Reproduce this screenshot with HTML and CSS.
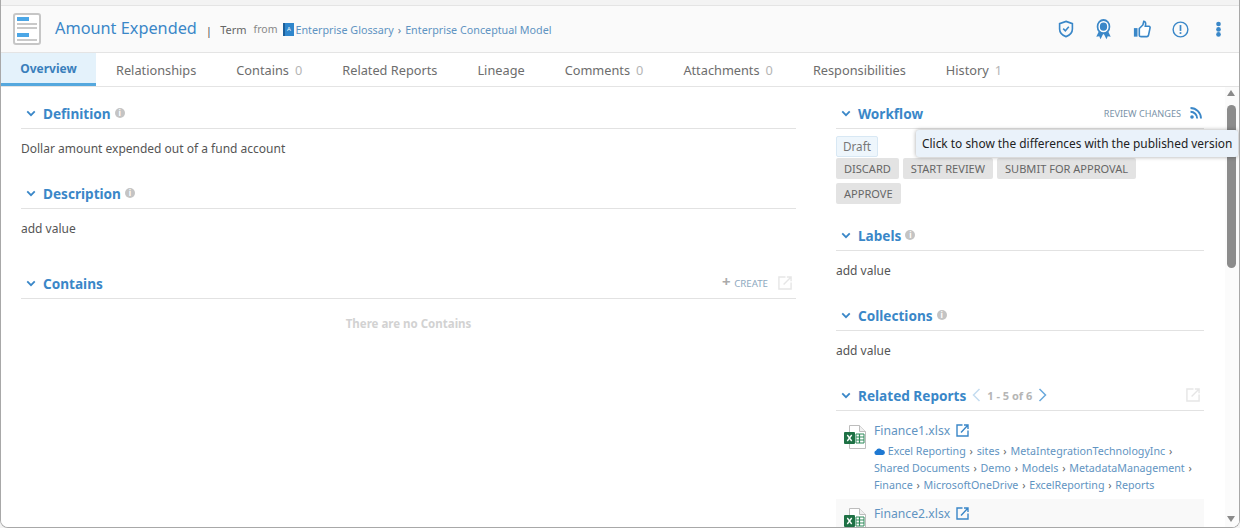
FILE: index.html
```html
<!DOCTYPE html>
<html lang="en">
<head>
<meta charset="utf-8">
<title>Amount Expended</title>
<link rel="stylesheet" href="styles.css">
</head>
<body>
<div class="app">
  <header class="head">
    <svg class="term-icon" width="28" height="32" viewBox="0 0 28 32">
      <rect x="1" y="1" width="26" height="30" rx="2" fill="#fff" stroke="#c6c6c6" stroke-width="2"/>
      <rect x="4" y="4" width="12" height="4" fill="#4ba6e6"/>
      <rect x="4" y="10" width="20" height="2" fill="#c9c9c9"/>
      <rect x="4" y="14" width="20" height="2" fill="#c9c9c9"/>
      <rect x="4" y="20" width="12" height="4" fill="#4ba6e6"/>
      <rect x="4" y="26" width="20" height="2" fill="#c9c9c9"/>
    </svg>
    <h1 class="title">Amount Expended</h1>
    <span class="sep">|</span>
    <span class="kind">Term</span>
    <span class="from">from</span>
    <span class="glossary-icon">A</span>
    <a class="crumb">Enterprise Glossary</a>
    <span class="crumb-sep">›</span>
    <a class="crumb">Enterprise Conceptual Model</a>
    <div class="actions">
      <svg width="16" height="18" viewBox="0 0 20 20" preserveAspectRatio="none" fill="none" stroke="#3a87c8" stroke-width="2"><path d="M10 1.500 18 4v6c0 4.500-3.500 7-8 8.500C5.500 17 2 14.500 2 10V4z"/><path d="M6.500 9.500 9.200 12l4.300-4.500"/></svg>
      <svg width="17" height="21" viewBox="0 0 20 22" preserveAspectRatio="none"><path d="M5 12 1.500 18.500l3.500-.3 1.500 3L10 15l3.500 6.200 1.500-3 3.500.3L15 12z" fill="#3a87c8"/><circle cx="10" cy="8" r="7" fill="#fff" stroke="#3a87c8" stroke-width="2"/><circle cx="10" cy="8" r="4.300" fill="#3a87c8"/></svg>
      <svg width="18" height="18" viewBox="0 0 20 20"><rect x="1" y="9" width="4" height="9.500" fill="#3a87c8"/><path d="M7 9.500 11 5.500 12 1.500c2 0 2.500 2 1.700 5.500h4c1 0 1.500 1 1.200 2l-1.700 8c-.2.800-.8 1.500-1.700 1.500H9c-1 0-2-.5-2-1.500z" fill="#fff" stroke="#3a87c8" stroke-width="1.800"/></svg>
      <svg width="17" height="17" viewBox="0 0 18 18"><circle cx="9" cy="9" r="7.800" fill="none" stroke="#3a87c8" stroke-width="1.500"/><rect x="8.100" y="4.300" width="1.800" height="6.200" fill="#3a87c8"/><rect x="8.100" y="11.800" width="1.800" height="1.900" fill="#3a87c8"/></svg>
      <svg class="dots" width="5" height="18" viewBox="0 0 6 18"><circle cx="3" cy="3" r="2.800" fill="#3a87c8"/><circle cx="3" cy="9.500" r="2.800" fill="#3a87c8"/><circle cx="3" cy="15.500" r="2.800" fill="#3a87c8"/></svg>
    </div>
  </header>
  <nav class="tabs">
    <a class="tab active">Overview</a>
    <a class="tab">Relationships</a>
    <a class="tab">Contains <i>0</i></a>
    <a class="tab">Related Reports</a>
    <a class="tab">Lineage</a>
    <a class="tab">Comments <i>0</i></a>
    <a class="tab">Attachments <i>0</i></a>
    <a class="tab">Responsibilities</a>
    <a class="tab">History <i>1</i></a>
  </nav>
  <div class="body">
    <main class="left">
      <section class="sec">
        <div class="sec-head"><svg class="chev" width="10" height="7" viewBox="0 0 12 8"><path d="M1.500 1.500 6 6l4.500-4.500" fill="none" stroke="#3a87c8" stroke-width="2.200"/></svg><h2>Definition</h2><span class="info">i</span></div>
        <p class="val">Dollar amount expended out of a fund account</p>
      </section>
      <section class="sec">
        <div class="sec-head"><svg class="chev" width="10" height="7" viewBox="0 0 12 8"><path d="M1.500 1.500 6 6l4.500-4.500" fill="none" stroke="#3a87c8" stroke-width="2.200"/></svg><h2>Description</h2><span class="info">i</span></div>
        <p class="val">add value</p>
      </section>
      <section class="sec contains">
        <div class="sec-head"><svg class="chev" width="10" height="7" viewBox="0 0 12 8"><path d="M1.500 1.500 6 6l4.500-4.500" fill="none" stroke="#3a87c8" stroke-width="2.200"/></svg><h2>Contains</h2>
          <span class="create"><b>+</b> CREATE</span>
          <svg class="ext faint" width="14" height="14" viewBox="0 0 15 15" fill="none" stroke="#e6e6e6" stroke-width="1.500"><path d="M8 1H1v13h13V7"/><path d="M6 9 14 1M9.500 1H14v4.500"/></svg>
        </div>
        <p class="empty">There are no Contains</p>
      </section>
    </main>
    <aside class="right">
      <section class="sec workflow">
        <div class="sec-head"><svg class="chev" width="10" height="7" viewBox="0 0 12 8"><path d="M1.500 1.500 6 6l4.500-4.500" fill="none" stroke="#3a87c8" stroke-width="2.200"/></svg><h2>Workflow</h2>
          <span class="review">REVIEW CHANGES</span>
          <svg class="rss" width="12" height="12" viewBox="0 0 12 12"><circle cx="2" cy="10" r="1.800" fill="#3a87c8"/><path d="M.5 4.800a6.700 6.700 0 0 1 6.700 6.700M.5 1a10.500 10.500 0 0 1 10.500 10.500" fill="none" stroke="#3a87c8" stroke-width="1.900"/></svg>
        </div>
        <div class="wf">
          <span class="draft">Draft</span>
          <div class="btns"><span class="btn">DISCARD</span><span class="btn">START REVIEW</span><span class="btn">SUBMIT FOR APPROVAL</span><span class="btn">APPROVE</span></div>
        </div>
      </section>
      <section class="sec">
        <div class="sec-head"><svg class="chev" width="10" height="7" viewBox="0 0 12 8"><path d="M1.500 1.500 6 6l4.500-4.500" fill="none" stroke="#3a87c8" stroke-width="2.200"/></svg><h2>Labels</h2><span class="info">i</span></div>
        <p class="val">add value</p>
      </section>
      <section class="sec">
        <div class="sec-head"><svg class="chev" width="10" height="7" viewBox="0 0 12 8"><path d="M1.500 1.500 6 6l4.500-4.500" fill="none" stroke="#3a87c8" stroke-width="2.200"/></svg><h2>Collections</h2><span class="info">i</span></div>
        <p class="val">add value</p>
      </section>
      <section class="sec">
        <div class="sec-head"><svg class="chev" width="10" height="7" viewBox="0 0 12 8"><path d="M1.500 1.500 6 6l4.500-4.500" fill="none" stroke="#3a87c8" stroke-width="2.200"/></svg><h2>Related Reports</h2>
          <svg class="pg" width="9" height="14" viewBox="0 0 9 14"><path d="M7.500 1 1.500 7l6 6" fill="none" stroke="#c4dcf0" stroke-width="1.500"/></svg>
          <span class="pages">1 - 5 of 6</span>
          <svg class="pg" width="9" height="14" viewBox="0 0 9 14"><path d="M1.500 1l6 6-6 6" fill="none" stroke="#6aa9dc" stroke-width="1.500"/></svg>
          <svg class="ext faint" width="14" height="14" viewBox="0 0 15 15" fill="none" stroke="#e6e6e6" stroke-width="1.500"><path d="M8 1H1v13h13V7"/><path d="M6 9 14 1M9.500 1H14v4.500"/></svg>
        </div>
        <div class="report">
          <svg class="xls" width="22" height="24" viewBox="0 0 22 24"><path d="M5.500.500h10l6 6v17h-16z" fill="#fff" stroke="#bdbdbd"/><path d="M15.500.500v6h6" fill="#f0f0f0" stroke="#bdbdbd"/><path d="M12 9h8v9h-8z" fill="#fff" stroke="#2f8a5a"/><path d="M12 12h8M12 15h8M15.500 9v9" stroke="#2f8a5a" stroke-width="1.200"/><rect x="0" y="7" width="11" height="12" rx="1" fill="#1e7145"/><path d="M3.300 10 7.700 16M7.700 10 3.300 16" stroke="#fff" stroke-width="1.300"/></svg>
          <div class="rep-text">
            <div class="rep-name"><a>Finance1.xlsx</a><svg width="13" height="13" viewBox="0 0 13 13" fill="none" stroke="#3a87c8" stroke-width="1.400"><path d="M6.500 1H1v11h11V6.500"/><path d="M5 8.500 12 1M8 1h4v4"/></svg></div>
            <div class="path"><svg width="11" height="7" viewBox="0 0 11 7"><path d="M2.500 7a2.300 2.300 0 0 1-.4-4.500A3.300 3.300 0 0 1 8 2a2.500 2.500 0 0 1 .7 5z" fill="#1e78d2"/></svg> <a>Excel Reporting</a> <s>›</s> <a>sites</a> <s>›</s> <a>MetaIntegrationTechnologyInc</a> <s>›</s> <a>Shared Documents</a> <s>›</s> <a>Demo</a> <s>›</s> <a>Models</a> <s>›</s> <a>MetadataManagement</a> <s>›</s> <a>Finance</a> <s>›</s> <a>MicrosoftOneDrive</a> <s>›</s> <a>ExcelReporting</a> <s>›</s> <a>Reports</a></div>
          </div>
        </div>
        <div class="report alt">
          <svg class="xls" width="22" height="24" viewBox="0 0 22 24"><path d="M5.500.500h10l6 6v17h-16z" fill="#fff" stroke="#bdbdbd"/><path d="M15.500.500v6h6" fill="#f0f0f0" stroke="#bdbdbd"/><path d="M12 9h8v9h-8z" fill="#fff" stroke="#2f8a5a"/><path d="M12 12h8M12 15h8M15.500 9v9" stroke="#2f8a5a" stroke-width="1.200"/><rect x="0" y="7" width="11" height="12" rx="1" fill="#1e7145"/><path d="M3.300 10 7.700 16M7.700 10 3.300 16" stroke="#fff" stroke-width="1.300"/></svg>
          <div class="rep-text">
            <div class="rep-name"><a>Finance2.xlsx</a><svg width="13" height="13" viewBox="0 0 13 13" fill="none" stroke="#3a87c8" stroke-width="1.400"><path d="M6.500 1H1v11h11V6.500"/><path d="M5 8.500 12 1M8 1h4v4"/></svg></div>
          </div>
        </div>
      </section>
    </aside>
    <div class="scroll">
      <div class="arr up"></div>
      <div class="track"><div class="thumb"></div></div>
      <div class="arr down"></div>
    </div>
    <div class="tip">Click to show the differences with the published version</div>
  </div>
</div>
</body>
</html>
```
FILE: styles.css
```css
* { box-sizing: border-box; }
html, body { margin: 0; height: 100%; overflow: hidden; }
body { background: #f3f3f3; font-family: "Noto Sans", "Open Sans", sans-serif; color: #555; font-size: 12px; }
.app { height: 528px; padding-top: 5px; display: flex; flex-direction: column; border-left: 1px solid #a8a8a8; border-right: 1px solid #a8a8a8; border-bottom: 1px solid #a8a8a8; border-radius: 0 0 8px 8px; overflow: hidden; }
.head { height: 48px; flex: none; display: flex; align-items: center; padding: 0 18px 0 12px; background: #fafafa; border-top: 1px solid #e4e4e4; border-bottom: 1px solid #e4e4e4; }
.term-icon { flex: none; margin-right: 14px; }
.title { margin: 0 0 2px; font-size: 16.300px; font-weight: 400; color: #3a87c8; white-space: nowrap; }
.sep { margin: 2px 8px 0 9px; font-size: 11.500px; color: #555; }
.kind { font-size: 11px; color: #666; margin-right: 7px; }
.from { font-size: 10.500px; color: #888; margin-right: 5px; }
.glossary-icon { width: 11px; height: 13px; background: #2f86cc; color: #fff; font-size: 6px; text-align: center; line-height: 13px; margin-right: 2px; border-left: 2px solid #1c5f9a; }
.crumb { font-size: 10.750px; margin-top: 1px; color: #5f94c2; white-space: nowrap; }
.crumb-sep { margin: 0 4px; font-size: 11px; color: #5f7f9a; }
.actions { margin-left: auto; display: flex; align-items: center; gap: 21px; }
.dots { margin-left: 6px; }
.tabs { height: 34px; flex: none; display: flex; background: #fff; border-bottom: 1px solid #e4e4e4; }
.tab { display: flex; align-items: center; padding: 0 20px; font-size: 12.750px; color: #6d6d6d; white-space: nowrap; gap: 4px; }
.tab i { font-style: normal; color: #b5b5b5; margin-left: 2px; }
.tab.active { width: 95px; font-size: 12px; background: #e4f2fb; color: #3a7fbc; font-weight: 700; border-bottom: 3px solid #55a8de; justify-content: center; padding: 0; }
.body { flex: 1; min-height: 0; display: flex; background: #fff; position: relative; overflow: hidden; }
.left { width: 795px; flex: none; padding: 14px 0 0 20px; }
.right { width: 368px; flex: none; margin-left: 40px; padding-top: 14px; }
.sec { margin-bottom: 24px; }
.sec.workflow { margin-bottom: 19px; }
.sec-head { height: 28px; display: flex; align-items: center; border-bottom: 1px solid #e2e2e2; padding: 0 0 3px 5px; }
.chev { flex: none; margin-right: 7px; }
h2 { margin: 0; font-size: 13.600px; font-weight: 700; color: #3a87c8; white-space: nowrap; }
.info { width: 10px; height: 10px; border-radius: 50%; background: #c4c4c4; color: #fff; font-size: 8px; font-weight: 700; line-height: 10px; text-align: center; margin-left: 4px; }
.val { margin: 12px 0 0; font-size: 12px; line-height: 16px; color: #555; }
.contains { margin-top: 34px; }
.create { margin-left: auto; font-size: 9.700px; color: #8ea9c0; }
.create b { color: #aaa; font-size: 15px; line-height: 10px; margin-right: 1px; }
.ext { flex: none; margin-left: 10px; margin-right: 4px; }
.empty { margin: 17px 0 0; text-align: center; font-weight: 700; font-size: 11.500px; color: #d2d2d2; }
.review { margin-left: auto; font-size: 9.150px; color: #7a92a8; }
.rss { margin: 0 2px 0 9px; }
.wf { padding-top: 7px; }
.draft { display: inline-block; height: 21px; line-height: 19px; padding: 0 6px; background: #eef6fc; border: 1px solid #d8e8f4; border-radius: 2px; color: #777; font-size: 11.700px; }
.btns { display: flex; flex-wrap: wrap; gap: 4px; margin-top: 1px; max-width: 320px; }
.btn { height: 21px; line-height: 21px; padding: 0 8px; background: #e3e3e3; border-radius: 2px; color: #666; font-size: 11.050px; white-space: nowrap; }
.pg { flex: none; margin: 0 6px; }
.pages { font-size: 11px; font-weight: 700; color: #b5b5b5; }
.right .pg ~ .ext { margin-left: auto; }
.report { display: flex; padding: 11px 8px 6px; }
.report.alt { background: #f9f9f9; height: 40px; padding-top: 6px; }
.xls { flex: none; margin: 3px 8px 0 0; }
.rep-name { display: flex; align-items: center; gap: 6px; font-size: 12.200px; color: #5f94c2; }
.path { margin-top: 4px; margin-bottom: -1px; font-size: 10.700px; line-height: 17px; color: #5f94c2; }
.path s { text-decoration: none; color: #666; margin: 0 1px; }
.scroll { position: absolute; right: 0; top: 0; bottom: 0; width: 14px; padding-right: 2px; display: flex; flex-direction: column; align-items: center; background: #fbfbfb; }
.arr { width: 0; height: 0; border-left: 4px solid transparent; border-right: 4px solid transparent; flex: none; }
.arr.up { border-bottom: 6px solid #8a8a8a; margin-top: 3px; }
.arr.down { border-top: 6px solid #8a8a8a; margin-bottom: 5px; }
.track { flex: 1; width: 9px; padding-top: 9px; }
.thumb { height: 163px; width: 9px; border-radius: 5px; background: #8c8c8c; }
.tip { position: absolute; left: 915px; top: 43px; width: 322px; height: 27px; line-height: 27px; padding-left: 6px; background: #eaf2fa; border-radius: 3px; color: #222; font-size: 11.900px; white-space: nowrap; box-shadow: 0 0 4px rgba(0,0,0,.35); }
```
